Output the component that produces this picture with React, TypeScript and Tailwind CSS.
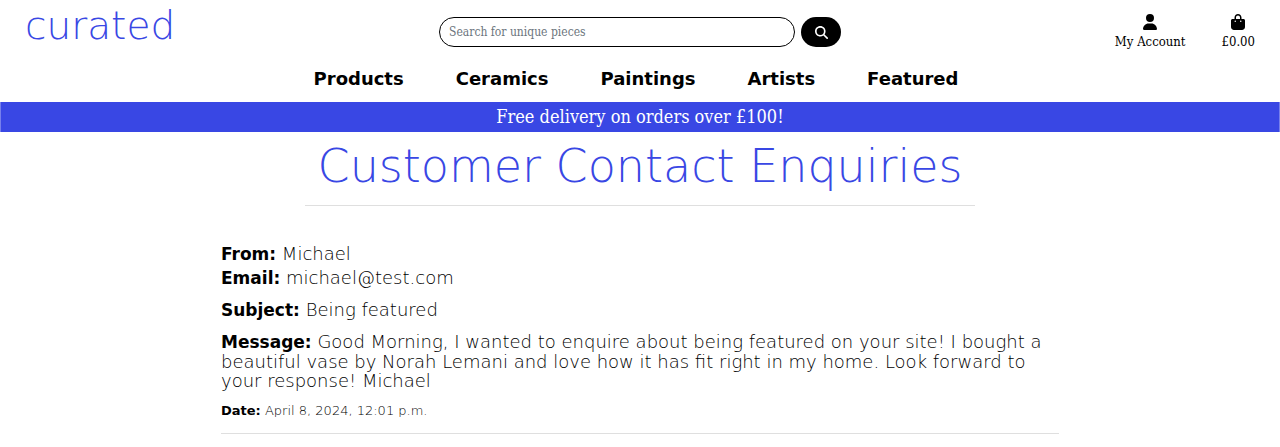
import React from "react";
import { FaBagShopping, FaMagnifyingGlass, FaUser } from "react-icons/fa6";

const links = ["Products", "Ceramics", "Paintings", "Artists", "Featured"];

function Header() {
  return (
    <header>
      <div className="grid grid-cols-3 items-start px-[25px]">
        <a
          href="#home"
          className="justify-self-start pt-1.5 text-[39px] leading-[40px] font-extralight text-[#3947e4]"
        >
          curated
        </a>
        <form
          className="flex gap-1.5 px-1 pt-[17px]"
          onSubmit={(event) => event.preventDefault()}
        >
          <input
            type="search"
            aria-label="Search for unique pieces"
            placeholder="Search for unique pieces"
            className="h-[30px] min-w-0 flex-1 rounded-full border border-black px-[9px] font-['DejaVu_Serif_Condensed','DejaVu_Serif',serif] text-[12px] outline-none placeholder:text-[#6c757d]"
          />
          <button
            type="submit"
            aria-label="Search"
            className="flex h-[30px] w-10 items-center justify-center rounded-full bg-black text-[13px] text-white"
          >
            <FaMagnifyingGlass />
          </button>
        </form>
        <div className="flex gap-9 justify-self-end pt-3.5 font-['DejaVu_Serif_Condensed','DejaVu_Serif',serif] text-[13px] leading-6">
          <a href="#account" className="flex flex-col items-center">
            <FaUser className="text-[16px]" />
            My Account
          </a>
          <a href="#bag" className="flex flex-col items-center">
            <FaBagShopping className="text-[16px]" />
            £0.00
          </a>
        </div>
      </div>
      <nav className="flex justify-center gap-[52px] pt-[13px] pr-2 pb-[11px] text-[18px] leading-6 font-bold">
        {links.map((link) => (
          <a key={link} href={`#${link.toLowerCase()}`}>
            {link}
          </a>
        ))}
      </nav>
    </header>
  );
}

function Field({ label, children }: { label: string; children: React.ReactNode }) {
  return (
    <p>
      <strong className="font-bold">{label}:</strong> {children}
    </p>
  );
}

export default function App() {
  return (
    <div className="bg-white font-['DejaVu_Sans',sans-serif] text-black">
      <Header />
      <div className="border-x border-[#7780ec] bg-[#3947e4] text-center font-['DejaVu_Serif_Condensed','DejaVu_Serif',serif] text-[18px] leading-[30px] text-white">
        Free delivery on orders over £100!
      </div>
      <main className="mx-auto max-w-[838px]">
        <h1 className="pt-2 text-center text-[46px] leading-[52px] font-extralight whitespace-nowrap text-[#3947e4]">
          Customer Contact Enquiries
        </h1>
        <hr className="mx-auto mt-[13px] w-4/5 border-[#dfdfdf]" />
        <article className="pt-[38px] leading-[19px] font-extralight">
          <div className="text-[18px] [&_strong]:text-[17px]">
            <div className="space-y-1">
              <Field label="From">Michael</Field>
              <Field label="Email">michael@test.com</Field>
            </div>
            <div className="space-y-3 pt-3">
              <Field label="Subject">Being featured</Field>
              <Field label="Message">
                Good Morning, I wanted to enquire about being featured on your site! I bought a
                beautiful vase by Norah Lemani and love how it has fit right in my home. Look
                forward to your response! Michael
              </Field>
            </div>
          </div>
          <div className="pt-[11px] text-[13px]">
            <Field label="Date">April 8, 2024, 12:01 p.m.</Field>
          </div>
          <hr className="mt-[13px] border-[#dfdfdf]" />
        </article>
      </main>
    </div>
  );
}
